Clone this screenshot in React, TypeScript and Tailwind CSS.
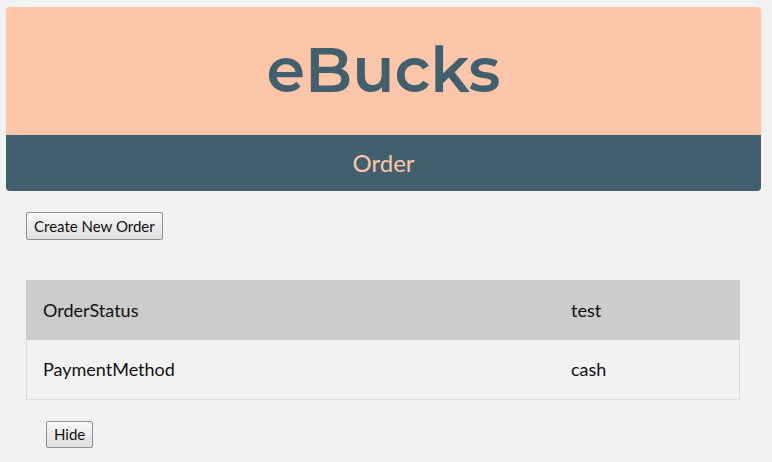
export default function App() {
  const rows = [
    { label: "OrderStatus", value: "test", bg: "bg-[#cccccc] border border-[#cccccc]" },
    { label: "PaymentMethod", value: "cash", bg: "bg-[#f2f2f2] border border-t-0 border-[#dcdcdc]" },
  ];

  return (
    <div className="min-h-[462px] bg-[#f2f2f2] px-[6px] pt-[7px] font-['Lato','Liberation_Sans',sans-serif] text-[#111]">
      <div className="flex h-[128px] w-[755px] items-center justify-center rounded-t-[4px] bg-[#fdc6ab]">
        <h1 className="pb-[2px] font-['Montserrat','DejaVu_Sans',sans-serif] text-[62px] font-semibold leading-none text-[#425f6d]">
          eBucks
        </h1>
      </div>
      <div className="flex h-[56px] w-[755px] items-center justify-center rounded-b-[4px] bg-[#425f6d]">
        <h2 className="text-[24px] leading-none text-[#fdc6ab]">Order</h2>
      </div>

      <div className="px-[20px] pt-[21px]">
        <button className="h-[28px] rounded-[2px] border border-[#8f8f8f] bg-gradient-to-b from-[#f8f8f8] to-[#dedede] px-[7px] text-[15px] leading-none text-[#111]">
          Create New Order
        </button>

        <div className="mt-[40px] w-[714px]">
          {rows.map((r) => (
            <div key={r.label} className={`flex h-[60px] items-center text-[18px] ${r.bg}`}>
              <div className="w-[528px] pl-[16px]">{r.label}</div>
              <div className="pl-[16px]">{r.value}</div>
            </div>
          ))}
        </div>

        <div className="pl-[20px] pt-[21px]">
          <button className="h-[27px] rounded-[2px] border border-[#8f8f8f] bg-gradient-to-b from-[#f8f8f8] to-[#dedede] px-[7px] text-[15px] leading-none text-[#111]">
            Hide
          </button>
        </div>
      </div>
    </div>
  );
}
